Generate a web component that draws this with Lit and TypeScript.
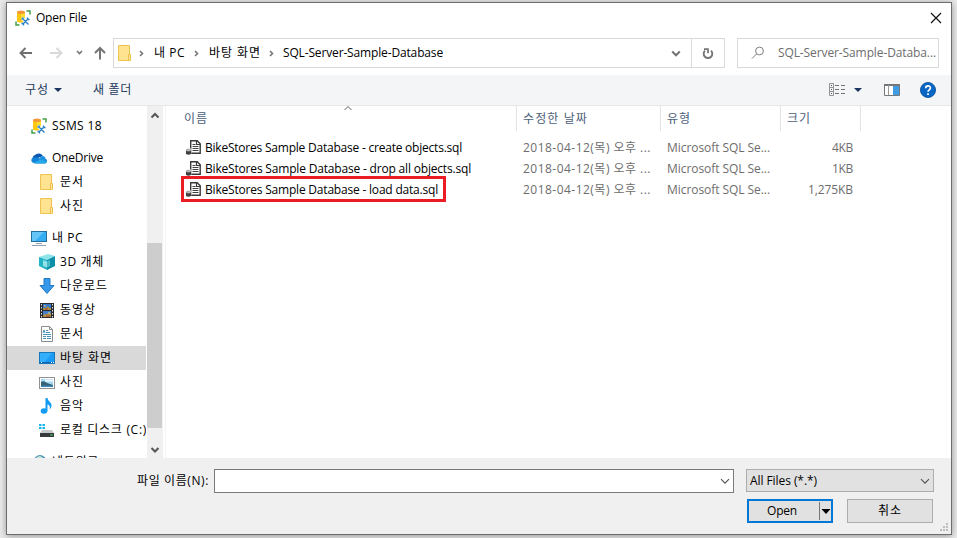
import { LitElement, html, svg, css, nothing } from "lit";
import { customElement, property } from "lit/decorators.js";
import { classMap } from "lit/directives/class-map.js";

const folder = svg`<path d="M1.500 .5h11v11h1v4h-12z" fill="#ffe391" stroke="#eec44f"/><path d="M11.500 15v-5.500h2V15" fill="#ffe799" stroke="#eac04b"/>`;
const page = svg`<path d="M2.500 .5h8l3 3v12h-11z" fill="#fff" stroke="#8c8c8c"/><path d="M10.500 .5v3h3" fill="none" stroke="#8c8c8c"/>`;
const screen = svg`<rect x=".5" y="2.500" width="15" height="11" fill="#1a9bf5" stroke="#1877ba"/><path d="M1 3h12L5 13H1z" fill="#35aefc"/>`;

const icons: Record<string, unknown> = {
  ssms: svg`<path d="M2 2v9c0 2 8 2 8 0V2z" fill="#fdc70c"/><path d="M6 4h4v7H6z" fill="#ffdf36"/><ellipse cx="6" cy="2.200" rx="4" ry="1.800" fill="#f0983c"/><path d="M11.500 1H15v3.500M1 11.500V15h3.500" fill="none" stroke="#43a047" stroke-width="1.500"/><path d="M7 8l7 7M14 8l-7 7" stroke="#fff" stroke-width="3"/><path d="M7.500 8.500l6 6M13.500 8.500l-6 6M6.500 9.500l2-2M12.500 7.500v2h2M6.500 13.500h2v2" fill="none" stroke="#2580c8" stroke-width="1.300"/>`,
  cloud: svg`<path d="M2 10a3.500 3.500 0 0 1 2-5 5 5 0 0 1 8 1z" fill="#0a59b2"/><path d="M1.500 12.500C-.5 11 .2 7.800 3 7.500c3-1 5 1 7 2l-5 4z" fill="#1284d8"/><path d="M8 9c2-4 6-4 6.500-.5C17 10 16.500 13 14 13.500H5z" fill="#1f92df"/><path d="M2 13l8-3.500 5.500 2.500c-.5 1.200-1 1.500-2 1.500H4z" fill="#29a8ec"/>`,
  folder,
  pc: svg`<rect x=".5" y="1.500" width="15" height="10" fill="#36adf3" stroke="#236f9e"/><path d="M1 2h12L4 11H1z" fill="#65c5f9"/><path d="M5 13.500h6M1 15.500h14" stroke="#91a1ae"/>`,
  cube: svg`<path d="M0 3l9-3 7 2-8 4z" fill="#8de4e9"/><path d="M0 3l8 3v10l-8-4z" fill="#22b3c5"/><path d="M8 6l8-4v10l-8 4z" fill="#0e8fa8"/><path d="M4 6l4 1.500v6L4 12z" fill="#8fe3e6"/><path d="M8 7.500l3-1.500v6l-3 1.500z" fill="#47b9c8"/>`,
  download: svg`<path d="M5 .5h6v7h4L8 15.500 1 7.500h4z" fill="#3598eb" stroke="#2078bf"/>`,
  video: svg`<rect x="1" y="1" width="14" height="15" fill="#26292e"/><path d="M2.500 2v14M13.500 2v14" stroke="#e1e1e1" stroke-dasharray="1.500 1.500"/><path d="M4 2h8v6H4z" fill="#3577c9"/><path d="M4 9h8v6H4z" fill="#477fca"/><path d="M4 6h3l2-2 1 2h2v2H4zM4 13l3-1h3l2-1v4H4z" fill="#b09142"/><path d="M5 4h2M9 11h2" stroke="#f7db6d"/><path d="M6 7h3M7 14h4" stroke="#a83e31"/>`,
  document: svg`${page}<path d="M4 7l1-3 1 3M7 4.500h2M7 6.500h4M4 8.500h8M4 10.500h3M8 10.500h4M4 12.500h3M8 12.500h4" fill="none" stroke="#4a93bc"/>`,
  desktop: svg`${screen}<path d="M1 12.500h14" stroke="#0b64b5"/><path d="M2 12.500h1M12 12.500h1M14 12.500h1" stroke="#fff"/>`,
  picture: svg`<rect x=".5" y="3.500" width="15" height="11" fill="#fff" stroke="#919191"/><path d="M2 5h12v8H2z" fill="#a5d8f3"/><path d="M2 8q3-2 6 1l6 2v1H2z" fill="#356274"/><path d="M2 11.500h12V13H2z" fill="#3c86b8"/><path d="M6 6.500h8" stroke="#eef8fe" stroke-width="2"/>`,
  music: svg`<ellipse cx="5" cy="13" rx="3.300" ry="2.700" fill="#119cf2"/><path d="M6.500 0h2c0 3 4 4 4 7.500 0 2-1 3-2 4 1-3 0-4.500-2-5V13h-2z" fill="#119cf2"/>`,
  disk: svg`<path d="M0 2h2.500v2H0zM3.500 2H6v2H3.500zM0 5h2.500v2H0zM3.500 5H6v2H3.500z" fill="#15b5ef"/><path d="M3 8h10l2 3H1z" fill="#c7cacd"/><path d="M1 11h14v4H1z" fill="#37393b"/><path d="M11 13h3" stroke="#45d663"/>`,
  network: svg`<circle cx="9" cy="7" r="6" fill="#4b92bd"/><path d="M5 4q4-4 7 0l-3 3z" fill="#c3e3d4"/>`,
  sql: svg`<path d="M4.700 .7h6.500l3 3v9.600H4.700z" fill="#fff" stroke="#393939" stroke-width="1.400"/><path d="M10.500 .5v4h4" fill="none" stroke="#393939" stroke-width="1.200"/><path d="M6.500 4.500h3M6.500 6.500h6M6.500 8.500h6M6.500 10.500h6" stroke="#424242"/><path d="M-.5 8.500h5.800V15h-5.800z" fill="#fff"/><path d="M0 10.500V14q2.500 1.500 5 0v-3.500z" fill="#3f3f3f"/><ellipse cx="2.500" cy="10.200" rx="2.300" ry="1.100" fill="#c6c6c6" stroke="#777" stroke-width=".5"/>`,
  back: svg`<path d="M14 8H2.500M7.500 3l-5 5 5 5" fill="none" stroke="#6f6f6f" stroke-width="1.900"/>`,
  forward: svg`<path d="M2 8h11.500M8.500 3l5 5-5 5" fill="none" stroke="#d9d9d9" stroke-width="1.900"/>`,
  up: svg`<path d="M8 14.500V3M3 8l5-5 5 5" fill="none" stroke="#757575" stroke-width="2"/>`,
  small: svg`<path d="M5 6l2.500 2.500L10 6" fill="none" stroke="#777" stroke-width="1.700"/>`,
  crumb: svg`<path d="M7 6l2.500 2.500L7 11" fill="none" stroke="#757575" stroke-width="1.600"/>`,
  chevron: svg`<path d="M4.200 6.500L8 10.200l3.800-3.700" fill="none" stroke="#757575" stroke-width="2.100"/>`,
  thin: svg`<path d="M4 6.200l4 4 4-4" fill="none" stroke="#505050" stroke-width="1.100"/>`,
  sort: svg`<path d="M4.500 10L8 6.500l3.500 3.500" fill="none" stroke="#5f5f5f"/>`,
  scrollUp: svg`<path d="M4.500 9.500L8 6l3.500 3.500" fill="none" stroke="#555" stroke-width="2"/>`,
  scrollDown: svg`<path d="M4.500 6L8 9.500 11.500 6" fill="none" stroke="#555" stroke-width="2"/>`,
  refresh: svg`<path d="M11 5.600a4.300 4.300 0 1 1-6 0" fill="none" stroke="#757575" stroke-width="1.900"/><path d="M4 4.200h4v4" fill="none" stroke="#757575" stroke-width="1.700"/>`,
  search: svg`<circle cx="9.500" cy="6" r="3.900" fill="none" stroke="#7e7e7e"/><path d="M6.500 9L2 13.500" stroke="#7e7e7e"/>`,
  close: svg`<path d="M3 3l10 10M13 3L3 13" stroke="#111" stroke-width="1.150"/>`,
  caret: svg`<path d="M4 6h8l-4 4z" fill="#1c355e"/>`,
  blackCaret: svg`<path d="M3.500 6h9L8 11z" fill="#000"/>`,
  view: svg`<path d="M.5 1.500h4v12h-4zM0 5.500h5M0 9.500h5" fill="none" stroke="#929292"/><path d="M2 3.500h1M2 7.500h1M2 11.500h1" stroke="#555"/><path d="M6 3.500h4M12 3.500h4M6 7.500h4M12 7.500h4M6 11.500h4M12 11.500h4" stroke="#747474"/>`,
  pane: svg`<path d="M.5 2.500h15v11H.5z" fill="#fff" stroke="#777"/><path d="M0 3h16" stroke="#777" stroke-width="2"/><path d="M4.500 3v10" stroke="#999"/><path d="M9 4h6v9H9z" fill="#3f9be2"/>`,
  help: svg`<circle cx="8" cy="8" r="7.600" fill="#0867c5" stroke="#084e96" stroke-width=".8"/><path d="M5.700 6.300c0-3.200 4.700-3 4.700-.4C10.400 7.800 8 7.800 8 9.800M8 11.200v1.700" fill="none" stroke="#fff" stroke-width="1.700"/>`,
};

const icon = (name: string, cls = "") =>
  html`<svg class="icon ${cls}" viewBox="0 0 16 16" aria-hidden="true">${icons[name]}</svg>`;

/** A one-line label whose tracking is adjusted so the text spans a set width. */
@customElement("fit-label")
export class FitLabel extends LitElement {
  @property() text = "";
  @property({ type: Number }) span = 0;

  static styles = css`
    :host { display: block; flex: none; white-space: pre; }
    span { display: inline-block; }
  `;

  updated() {
    const el = this.renderRoot.querySelector("span")!;
    el.style.letterSpacing = "0px";
    const gaps = Math.max(1, this.text.length);
    const tracking = (this.span - el.getBoundingClientRect().width) / gaps;
    el.style.letterSpacing = `${tracking}px`;
  }

  render() {
    return html`<span>${this.text}</span>`;
  }
}

const label = (text: string, span: number, cls = "") =>
  html`<fit-label class=${cls} .text=${text} .span=${span}></fit-label>`;

interface Place { icon: string; text: string; span: number; child?: boolean; selected?: boolean; gap?: boolean }

const places: Place[] = [
  { icon: "ssms", text: "SSMS 18", span: 50 },
  { icon: "cloud", text: "OneDrive", span: 51, gap: true },
  { icon: "folder", text: "문서", span: 24, child: true },
  { icon: "folder", text: "사진", span: 24, child: true },
  { icon: "pc", text: "내 PC", span: 31, gap: true },
  { icon: "cube", text: "3D 개체", span: 44, child: true },
  { icon: "download", text: "다운로드", span: 48, child: true },
  { icon: "video", text: "동영상", span: 36, child: true },
  { icon: "document", text: "문서", span: 24, child: true },
  { icon: "desktop", text: "바탕 화면", span: 52, child: true, selected: true },
  { icon: "picture", text: "사진", span: 24, child: true },
  { icon: "music", text: "음악", span: 24, child: true },
  { icon: "disk", text: "로컬 디스크 (C:)", span: 87, child: true },
  { icon: "network", text: "네트워크", span: 47, gap: true },
];

const files = [
  { name: "BikeStores Sample Database - create objects.sql", span: 257, size: "4KB", sizeSpan: 21 },
  { name: "BikeStores Sample Database - drop all objects.sql", span: 266, size: "1KB", sizeSpan: 21 },
  { name: "BikeStores Sample Database - load data.sql", span: 233, size: "1,275KB", sizeSpan: 45, marked: true },
];

@customElement("app-root")
export class AppRoot extends LitElement {
  static styles = css`
    :host {
      display: block; box-sizing: border-box; width: 957px; height: 538px; padding: 2px 5px 3px 6px;
      overflow: hidden; background: #ebebeb; color: #000;
      font: 12px/18px "Open Sans", "Noto Sans CJK KR", sans-serif;
    }
    * { box-sizing: border-box; }
    .icon { display: block; width: 16px; height: 16px; flex: none; overflow: visible; }
    .dialog {
      width: 946px; height: 533px; border: 1px solid #6d6d6d; background: #fff;
      display: flex; flex-direction: column; box-shadow: 0 1px 7px rgba(0, 0, 0, .38);
    }
    .title { height: 29px; flex: none; display: flex; align-items: center; padding: 0 7px 0 8px; }
    .title fit-label { margin-left: 5px; flex: 1; }
    .nav { height: 43px; flex: none; display: flex; padding: 6px 12px 7px 11px; }
    .arrows { display: flex; align-items: center; width: 95px; }
    .fwd { margin-left: 14px; } .hist { margin-left: 8px; } .up { margin-left: 4px; }
    .address { width: 612px; height: 30px; border: 1px solid #d9d9d9; display: flex; align-items: center; }
    .address .place { margin-left: 3px; margin-right: -3px; }
    .address .sep { margin: 0 5px 0 3px; }
    .address .sep.last { margin: 0 4px 0 2px; }
    .drop { margin-left: auto; margin-right: 7px; }
    .reload { width: 33px; height: 28px; border-left: 1px solid #d9d9d9; display: grid; place-items: center; }
    .search { width: 202px; height: 30px; margin-left: 12px; border: 1px solid #d9d9d9; display: flex; align-items: center; padding-left: 12px; color: #6d6d6d; }
    .search fit-label { margin-left: 12px; }
    .tools { height: 31px; flex: none; background: #f4f5f7; border-bottom: 1px solid #e6e7e9; display: flex; align-items: center; padding: 0 15px 0 18px; color: #1e395b; }
    .organize { margin-right: 1px; }
    .newfolder { margin-left: 27px; }
    .view { margin-left: auto; margin-right: 5px; } .pane { margin: 0 20px 0 18px; }
    .main { height: 352px; flex: none; display: flex; overflow: hidden; }
    .side { width: 140px; height: 352px; overflow: hidden; padding-top: 8px; }
    .item { height: 24px; width: 139px; display: flex; align-items: center; padding-left: 24px; gap: 5px; overflow: hidden; }
    .child { padding-left: 32px; }
    .selected { background: #d9d9d9; }
    .gap8 { margin-top: 8px; }
    .scroll { width: 16px; background: #f0f0f0; display: flex; flex-direction: column; justify-content: space-between; padding: 2px 0 0; }
    .thumb { width: 15px; height: 185px; background: #cdcdcd; margin-top: 104px; }
    .list { flex: 1; margin-left: 2px; border-left: 1px solid #f3f3f3; position: relative; }
    .head { display: flex; height: 25px; color: #4c607a; }
    .head > div { border-right: 1px solid #e3e3e3; padding: 4px 0 0 6px; flex: none; }
    .c1 { width: 351px; } .head > .c1 { padding-left: 18px; }
    .c2 { width: 144px; } .c3 { width: 120px; } .c4 { width: 80px; }
    .sort { position: absolute; left: 174px; top: -6px; }
    .rows { padding-top: 6px; }
    .row { height: 21px; display: flex; align-items: center; color: #6d6d6d; position: relative; }
    .row .c1 { display: flex; align-items: center; padding-left: 20px; gap: 3px; color: #000; }
    .row .c2, .row .c3 { padding-left: 6px; }
    .row .c4 { display: flex; justify-content: flex-end; padding-right: 8px; }
    .mark { position: absolute; left: 15px; top: -3px; width: 265px; height: 26px; border: 3px solid #ec1c24; }
    .foot { flex: 1; background: #f0f0f0; position: relative; padding: 11px 17px 0 130px; }
    .line { display: flex; align-items: flex-start; }
    .name { width: 520px; height: 24px; margin-left: 5px; border: 1px solid #7a7a7a; background: #fff; display: flex; align-items: center; justify-content: flex-end; }
    .type { width: 188px; height: 23px; margin-left: 12px; border: 1px solid #adadad; background: #e1e1e1; display: flex; align-items: center; justify-content: space-between; padding-left: 3px; }
    .filename { margin-top: 3px; }
    .buttons { display: flex; justify-content: flex-end; gap: 14px; padding-right: 1px; margin-top: 6px; }
    .btn { width: 86px; height: 24px; background: #e1e1e1; border: 1px solid #adadad; display: flex; align-items: center; justify-content: center; }
    .open { border: 2px solid #0078d7; justify-content: flex-start; padding-left: 18px; }
    .split { margin-left: 22px; height: 18px; border-left: 1px solid #777; display: flex; align-items: center; width: 12px; }
    .split .icon { margin-left: -2px; }
    .grip { position: absolute; right: 2px; bottom: 2px; width: 9px; height: 9px; }
  `;

  render() {
    return html`<div class="dialog">
      <div class="title">${icon("ssms")}${label("Open File", 51)}${icon("close")}</div>
      <div class="nav">
        <div class="arrows">${icon("back")}${icon("forward", "fwd")}${icon("small", "hist")}${icon("up", "up")}</div>
        <div class="address">
          ${icon("folder", "place")}${icon("crumb", "sep")}${label("내 PC", 31)}
          ${icon("crumb", "sep")}${label("바탕 화면", 52)}
          ${icon("crumb", "sep last")}${label("SQL-Server-Sample-Database", 160)}
          ${icon("chevron", "drop")}
          <div class="reload">${icon("refresh")}</div>
        </div>
        <div class="search">${icon("search")}${label("SQL-Server-Sample-Databa...", 158)}</div>
      </div>
      <div class="tools">
        ${label("구성", 24, "organize")}${icon("caret")}${label("새 폴더", 39, "newfolder")}
        ${icon("view", "view")}${icon("caret")}${icon("pane", "pane")}${icon("help")}
      </div>
      <div class="main">
        <div class="side">
          ${places.map((p) => html`<div class=${classMap({ item: true, gap8: !!p.gap, child: !!p.child, selected: !!p.selected })}>
            ${icon(p.icon)}${label(p.text, p.span)}</div>`)}
        </div>
        <div class="scroll">${icon("scrollUp")}<div class="thumb"></div>${icon("scrollDown")}</div>
        <div class="list">
          ${icon("sort", "sort")}
          <div class="head">
            <div class="c1">${label("이름", 24)}</div>
            <div class="c2">${label("수정한 날짜", 65)}</div>
            <div class="c3">${label("유형", 24)}</div>
            <div class="c4">${label("크기", 24)}</div>
          </div>
          <div class="rows">
            ${files.map((f) => html`<div class="row">
              <div class="c1">${icon("sql")}${label(f.name, f.span)}</div>
              <div class="c2">${label("2018-04-12(목) 오후 ...", 128)}</div>
              <div class="c3">${label("Microsoft SQL Se...", 103)}</div>
              <div class="c4">${label(f.size, f.sizeSpan)}</div>
              ${f.marked ? html`<div class="mark"></div>` : nothing}
            </div>`)}
          </div>
        </div>
      </div>
      <div class="foot">
        <div class="line">
          ${label("파일 이름(N):", 72, "filename")}
          <div class="name">${icon("thin")}</div>
          <div class="type">${label("All Files (*.*)", 67)}${icon("thin")}</div>
        </div>
        <div class="buttons">
          <div class="btn open">${label("Open", 30)}<div class="split">${icon("blackCaret")}</div></div>
          <div class="btn">${label("취소", 24)}</div>
        </div>
        <svg class="grip" viewBox="0 0 9 9"><path d="M6 0h2v2H6zM3 3h2v2H3zM6 3h2v2H6zM0 6h2v2H0zM3 6h2v2H3zM6 6h2v2H6z" fill="#bdbdbd"/></svg>
      </div>
    </div>`;
  }
}
